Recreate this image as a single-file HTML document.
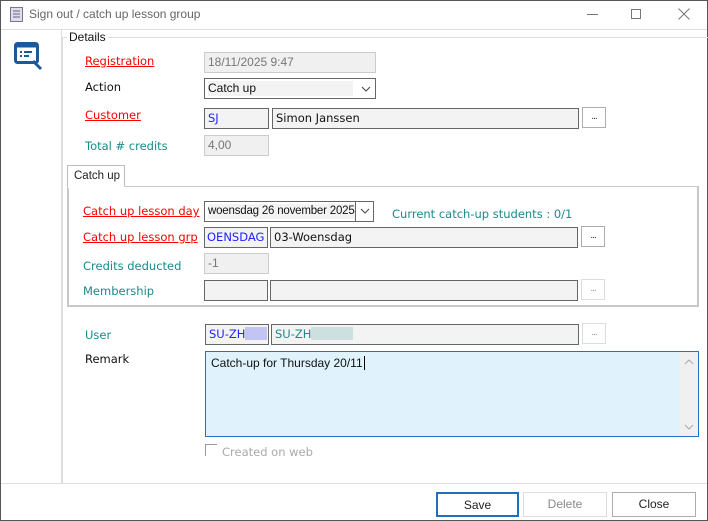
<!DOCTYPE html>
<html><head><style>
*{box-sizing:border-box;margin:0;padding:0}
body{width:708px;height:521px;position:relative;background:#fff;font-family:"DejaVu Sans",sans-serif;font-size:11px;overflow:hidden}
.a{position:absolute}
.win{left:0;top:0;width:708px;height:521px;border:1px solid #555}
.lbl{position:absolute;font-size:11.5px;white-space:nowrap}
.red{color:#f00;text-decoration:underline}
.teal{color:#1a8a8a}
.blk{color:#111}
.box{position:absolute;border:1px solid #666;background:#f3f3f3;font-size:11.5px;padding:2px 3px;white-space:nowrap;overflow:hidden;height:21px;line-height:15px;color:#111}
.dis{border-color:#ccc;background:#f0f0f0;color:#777;font-family:"Liberation Sans",sans-serif;font-size:12px}
.btn3{position:absolute;width:24px;height:21px;border:1px solid #adadad;background:#fff;text-align:center;font-size:9px;line-height:18px;color:#333;letter-spacing:-1px}
.b{position:absolute;height:25px;border:1px solid #adadad;background:#fff;text-align:center;line-height:22px;font-family:"Liberation Sans",sans-serif;font-size:12px;color:#222}
</style></head><body>
<div class="a win"></div>
<svg class="a" style="left:10px;top:7px" width="13" height="15"><rect x="0.5" y="0.5" width="12" height="14" fill="#dde" stroke="#778"/><path d="M3 4h7M3 7h7M3 10h7" stroke="#667"/></svg>
<div class="a" style="left:29px;top:7px;font-family:'Liberation Sans',sans-serif;font-size:12px;color:#666">Sign out / catch up lesson group</div>
<div class="a" style="left:587px;top:14px;width:11px;height:1px;background:#777"></div>
<div class="a" style="left:631px;top:9px;width:10px;height:10px;border:1px solid #777"></div>
<svg class="a" style="left:678px;top:8px" width="12" height="12"><path d="M0.5 0.5L11.5 11.5M11.5 0.5L0.5 11.5" stroke="#777"/></svg>
<div class="a" style="left:1px;top:29px;width:706px;height:1px;background:#ddd"></div>
<div class="a" style="left:61px;top:30px;width:1px;height:454px;background:#ddd"></div>
<div class="a" style="left:1px;top:483px;width:706px;height:1px;background:#ddd"></div>
<svg class="a" style="left:14px;top:42px" width="30" height="30"><rect x="1.5" y="1.5" width="22" height="19" rx="2" fill="none" stroke="#1b5a96" stroke-width="3"/><rect x="1.5" y="1.5" width="22" height="4" fill="#1b5a96"/><rect x="6" y="9" width="2" height="2" fill="#1b5a96"/><rect x="10" y="9" width="8" height="2" fill="#1b5a96"/><rect x="6" y="13" width="2" height="2" fill="#1b5a96"/><rect x="10" y="13" width="5" height="2" fill="#1b5a96"/><path d="M19 19l8 8" stroke="#1b5a96" stroke-width="3"/></svg>
<div class="a" style="left:62px;top:37px;width:646px;height:1px;background:#ddd"></div>
<div class="a" style="left:62px;top:37px;width:1px;height:446px;background:#ddd"></div>
<div class="a" style="left:67px;top:30px;background:#fff;padding:0 2px;font-family:'Liberation Sans',sans-serif;font-size:12px;color:#111">Details</div>

<div class="lbl red" style="left:85px;top:54px">Registration</div>
<div class="box dis" style="left:204px;top:52px;width:172px">18/11/2025 9:47</div>
<div class="lbl blk" style="left:85px;top:80px">Action</div>
<div class="box" style="left:204px;top:78px;width:172px;background:#fff;font-family:'Liberation Sans',sans-serif;font-size:12px"><span style="background:#f3f3f3;display:inline-block;width:145px">Catch up</span></div>
<svg class="a" style="left:361px;top:86px" width="10" height="6"><path d="M1 1l4 4 4-4" fill="none" stroke="#444"/></svg>
<div class="lbl red" style="left:85px;top:108px">Customer</div>
<div class="box" style="left:204px;top:108px;width:65px;color:#22f">SJ</div>
<div class="box" style="left:272px;top:108px;width:307px">Simon Janssen</div>
<div class="btn3" style="left:582px;top:107px">...</div>
<div class="lbl teal" style="left:85px;top:139px">Total # credits</div>
<div class="box dis" style="left:204px;top:135px;width:65px">4,00</div>

<div class="a" style="left:67px;top:165px;width:58px;height:22px;border:1px solid #bbb;border-bottom:none;background:#fff;font-family:'Liberation Sans',sans-serif;font-size:11.5px;color:#222;padding:4px 0 0 6px">Catch up</div>
<div class="a" style="left:67px;top:186px;width:632px;height:121px;border:2px solid #c8c8c8;border-top:1px solid #c8c8c8"></div>
<div class="a" style="left:68px;top:186px;width:56px;height:2px;background:#fff"></div>

<div class="lbl red" style="left:83px;top:204px">Catch up lesson day</div>
<div class="box" style="left:204px;top:201px;width:170px;font-family:'Liberation Sans',sans-serif;font-size:11.5px;background:#fff"><span style="display:inline-block;width:148px;background:#f3f3f3;letter-spacing:-0.2px">woensdag 26 november 2025</span></div>
<div class="a" style="left:355px;top:201px;width:1px;height:21px;background:#666"></div>
<svg class="a" style="left:360px;top:208px" width="10" height="6"><path d="M1 1l4 4 4-4" fill="none" stroke="#444"/></svg>
<div class="lbl teal" style="left:392px;top:207px">Current catch-up students : 0/1</div>
<div class="lbl red" style="left:83px;top:230px">Catch up lesson grp</div>
<div class="box" style="left:204px;top:227px;width:64px;color:#22f;padding-left:2px">OENSDAG</div>
<div class="box" style="left:270px;top:227px;width:308px">03-Woensdag</div>
<div class="btn3" style="left:581px;top:226px">...</div>
<div class="lbl teal" style="left:83px;top:259px">Credits deducted</div>
<div class="box dis" style="left:204px;top:253px;width:65px">-1</div>
<div class="lbl teal" style="left:83px;top:284px">Membership</div>
<div class="box" style="left:204px;top:280px;width:64px"></div>
<div class="box" style="left:270px;top:280px;width:308px"></div>
<div class="btn3" style="left:581px;top:279px;border-color:#ddd;color:#999">...</div>

<div class="lbl teal" style="left:85px;top:328px">User</div>
<div class="box" style="left:205px;top:324px;width:64px;color:#22f">SU-ZH<span style="display:inline-block;width:22px;height:13px;background:#c4c4f4;vertical-align:-2px"></span></div>
<div class="box" style="left:271px;top:324px;width:308px;color:#1a8a8a">SU-ZH<span style="display:inline-block;width:42px;height:13px;background:#cce0e0;vertical-align:-2px"></span></div>
<div class="btn3" style="left:582px;top:323px;border-color:#ddd;color:#999">...</div>
<div class="lbl blk" style="left:85px;top:352px">Remark</div>
<div class="a" style="left:205px;top:351px;width:494px;height:86px;border:1px solid #1f74c4;background:#e0f3fc;font-family:'Liberation Sans',sans-serif;font-size:12px;padding:4px 5px;color:#111">Catch-up for Thursday 20/11<span style="border-left:1px solid #000;margin-left:1px"></span></div>
<div class="a" style="left:680px;top:352px;width:18px;height:84px;background:#f0f0f0"></div>
<svg class="a" style="left:684px;top:359px" width="10" height="6"><path d="M1 5l4-4 4 4" fill="none" stroke="#aaa"/></svg>
<svg class="a" style="left:684px;top:424px" width="10" height="6"><path d="M1 1l4 4 4-4" fill="none" stroke="#aaa"/></svg>
<div class="a" style="left:205px;top:444px;width:12px;height:12px;border-left:1px solid #999;border-top:1px solid #999"></div>
<div class="lbl" style="left:222px;top:445px;color:#aaa">Created on web</div>

<div class="b" style="left:436px;top:492px;width:83px;border:2px solid #1f6fbf">Save</div>
<div class="b" style="left:523px;top:492px;width:84px;border-color:#ddd;color:#888">Delete</div>
<div class="b" style="left:612px;top:492px;width:84px">Close</div>
</body></html>
